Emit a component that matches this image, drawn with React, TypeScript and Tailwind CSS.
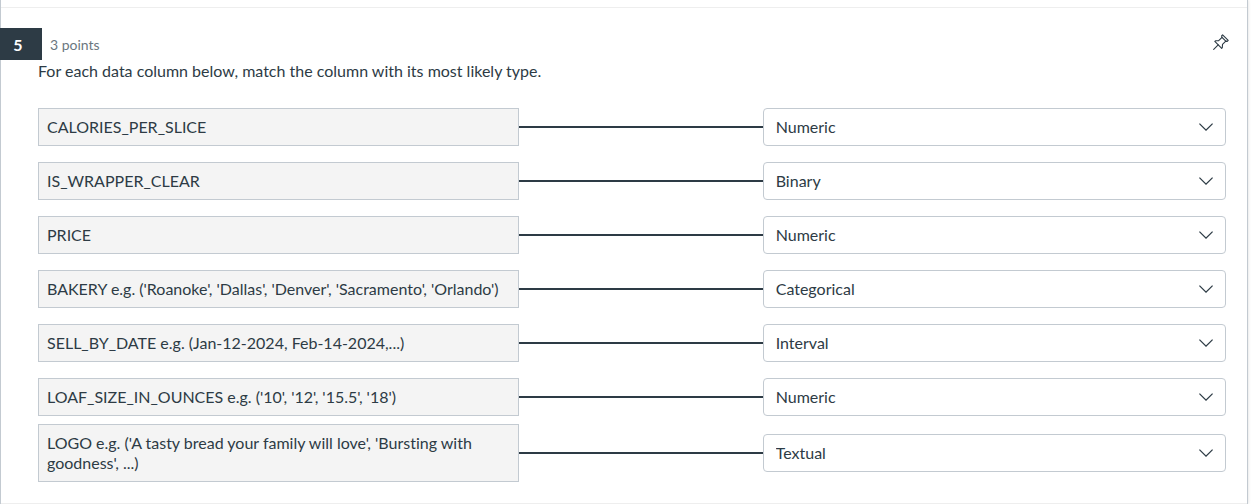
import { useState } from "react";

const TYPES = ["Numeric", "Binary", "Categorical", "Interval", "Textual"];

const COLUMNS = [
  { id: "calories", label: "CALORIES_PER_SLICE", answer: "Numeric" },
  { id: "wrapper", label: "IS_WRAPPER_CLEAR", answer: "Binary" },
  { id: "price", label: "PRICE", answer: "Numeric" },
  {
    id: "bakery",
    label: "BAKERY e.g. ('Roanoke', 'Dallas', 'Denver', 'Sacramento', 'Orlando')",
    answer: "Categorical",
  },
  { id: "sell-by", label: "SELL_BY_DATE e.g. (Jan-12-2024, Feb-14-2024,...)", answer: "Interval" },
  { id: "loaf", label: "LOAF_SIZE_IN_OUNCES e.g. ('10', '12', '15.5', '18')", answer: "Numeric" },
  {
    id: "logo",
    label: "LOGO e.g. ('A tasty bread your family will love', 'Bursting with goodness', ...)",
    answer: "Textual",
  },
];

function PinIcon() {
  return (
    <svg
      viewBox="0 0 16 16"
      className="size-4"
      fill="none"
      stroke="currentColor"
      strokeWidth="1.1"
      strokeLinejoin="round"
      strokeLinecap="round"
      aria-hidden="true"
    >
      <path d="M9.6 0.8 L15.2 6.3 L14.2 7.4 L12.8 7.1 L9.5 10.4 L9.3 13.7 L8.7 14.3 L1.8 7.4 L2.5 6.8 L5.7 6.6 L9 3.3 L8.6 1.9 Z" />
      <path d="M9 3.3 L12.8 7.1 M5.2 10.9 L0.7 15.4" />
    </svg>
  );
}

function ChevronIcon() {
  return (
    <svg
      viewBox="0 0 14 8"
      className="pointer-events-none col-start-1 row-start-1 mr-[13px] h-2 w-3.5 justify-self-end"
      fill="none"
      stroke="currentColor"
      strokeWidth="1.3"
      aria-hidden="true"
    >
      <path d="M0.4 0.6 L7 7.1 L13.6 0.6" />
    </svg>
  );
}

function MatchRow({ id, label, answer }: { id: string; label: string; answer: string }) {
  const [value, setValue] = useState(answer);
  return (
    <div className="grid min-h-[54px] grid-cols-[40.5%_1fr_39%] items-center">
      <label htmlFor={id} className="border border-[#c3cad1] bg-[#f4f4f4] px-2 py-2 leading-5">
        {label}
      </label>
      <div className="h-0.5 bg-[#2d3b45]" />
      <div className="grid items-center">
        <select
          id={id}
          value={value}
          onChange={(e) => setValue(e.target.value)}
          className="col-start-1 row-start-1 w-full appearance-none rounded border border-[#c3cad1] bg-white py-2 pr-9 pl-3 leading-5"
        >
          {TYPES.map((t) => (
            <option key={t}>{t}</option>
          ))}
        </select>
        <ChevronIcon />
      </div>
    </div>
  );
}

export default function App() {
  return (
    <div className="min-h-screen bg-white pr-[3px] font-['Lato',sans-serif] text-base text-[#2d3b45] [font-variant-ligatures:none]">
      <main className="min-h-screen border-x border-[#c3cad1] pt-[7px] shadow-[0_0_3px_rgba(0,0,0,0.15)]">
        <section className="border-y border-[#eeeeee] pt-5 pb-[21px]">
          <header className="flex items-start">
            <h2 className="-ml-px flex h-8 w-[42px] items-center justify-center bg-[#2d3b45] pr-1.5 font-bold text-white">
              <span className="pt-0.5">5</span>
            </h2>
            <p className="ml-2 pt-[7px] text-sm leading-5 text-[#6b7780]">3 points</p>
            <button type="button" aria-label="Pin question" className="mt-1.5 mr-[18px] ml-auto">
              <PinIcon />
            </button>
          </header>
          <div className="pr-[21px] pl-[37px]">
            <p className="leading-[22px]">For each data column below, match the column with its most likely type.</p>
            <div className="mt-[18px]">
              {COLUMNS.map((c) => (
                <MatchRow key={c.id} {...c} />
              ))}
            </div>
          </div>
        </section>
      </main>
    </div>
  );
}
